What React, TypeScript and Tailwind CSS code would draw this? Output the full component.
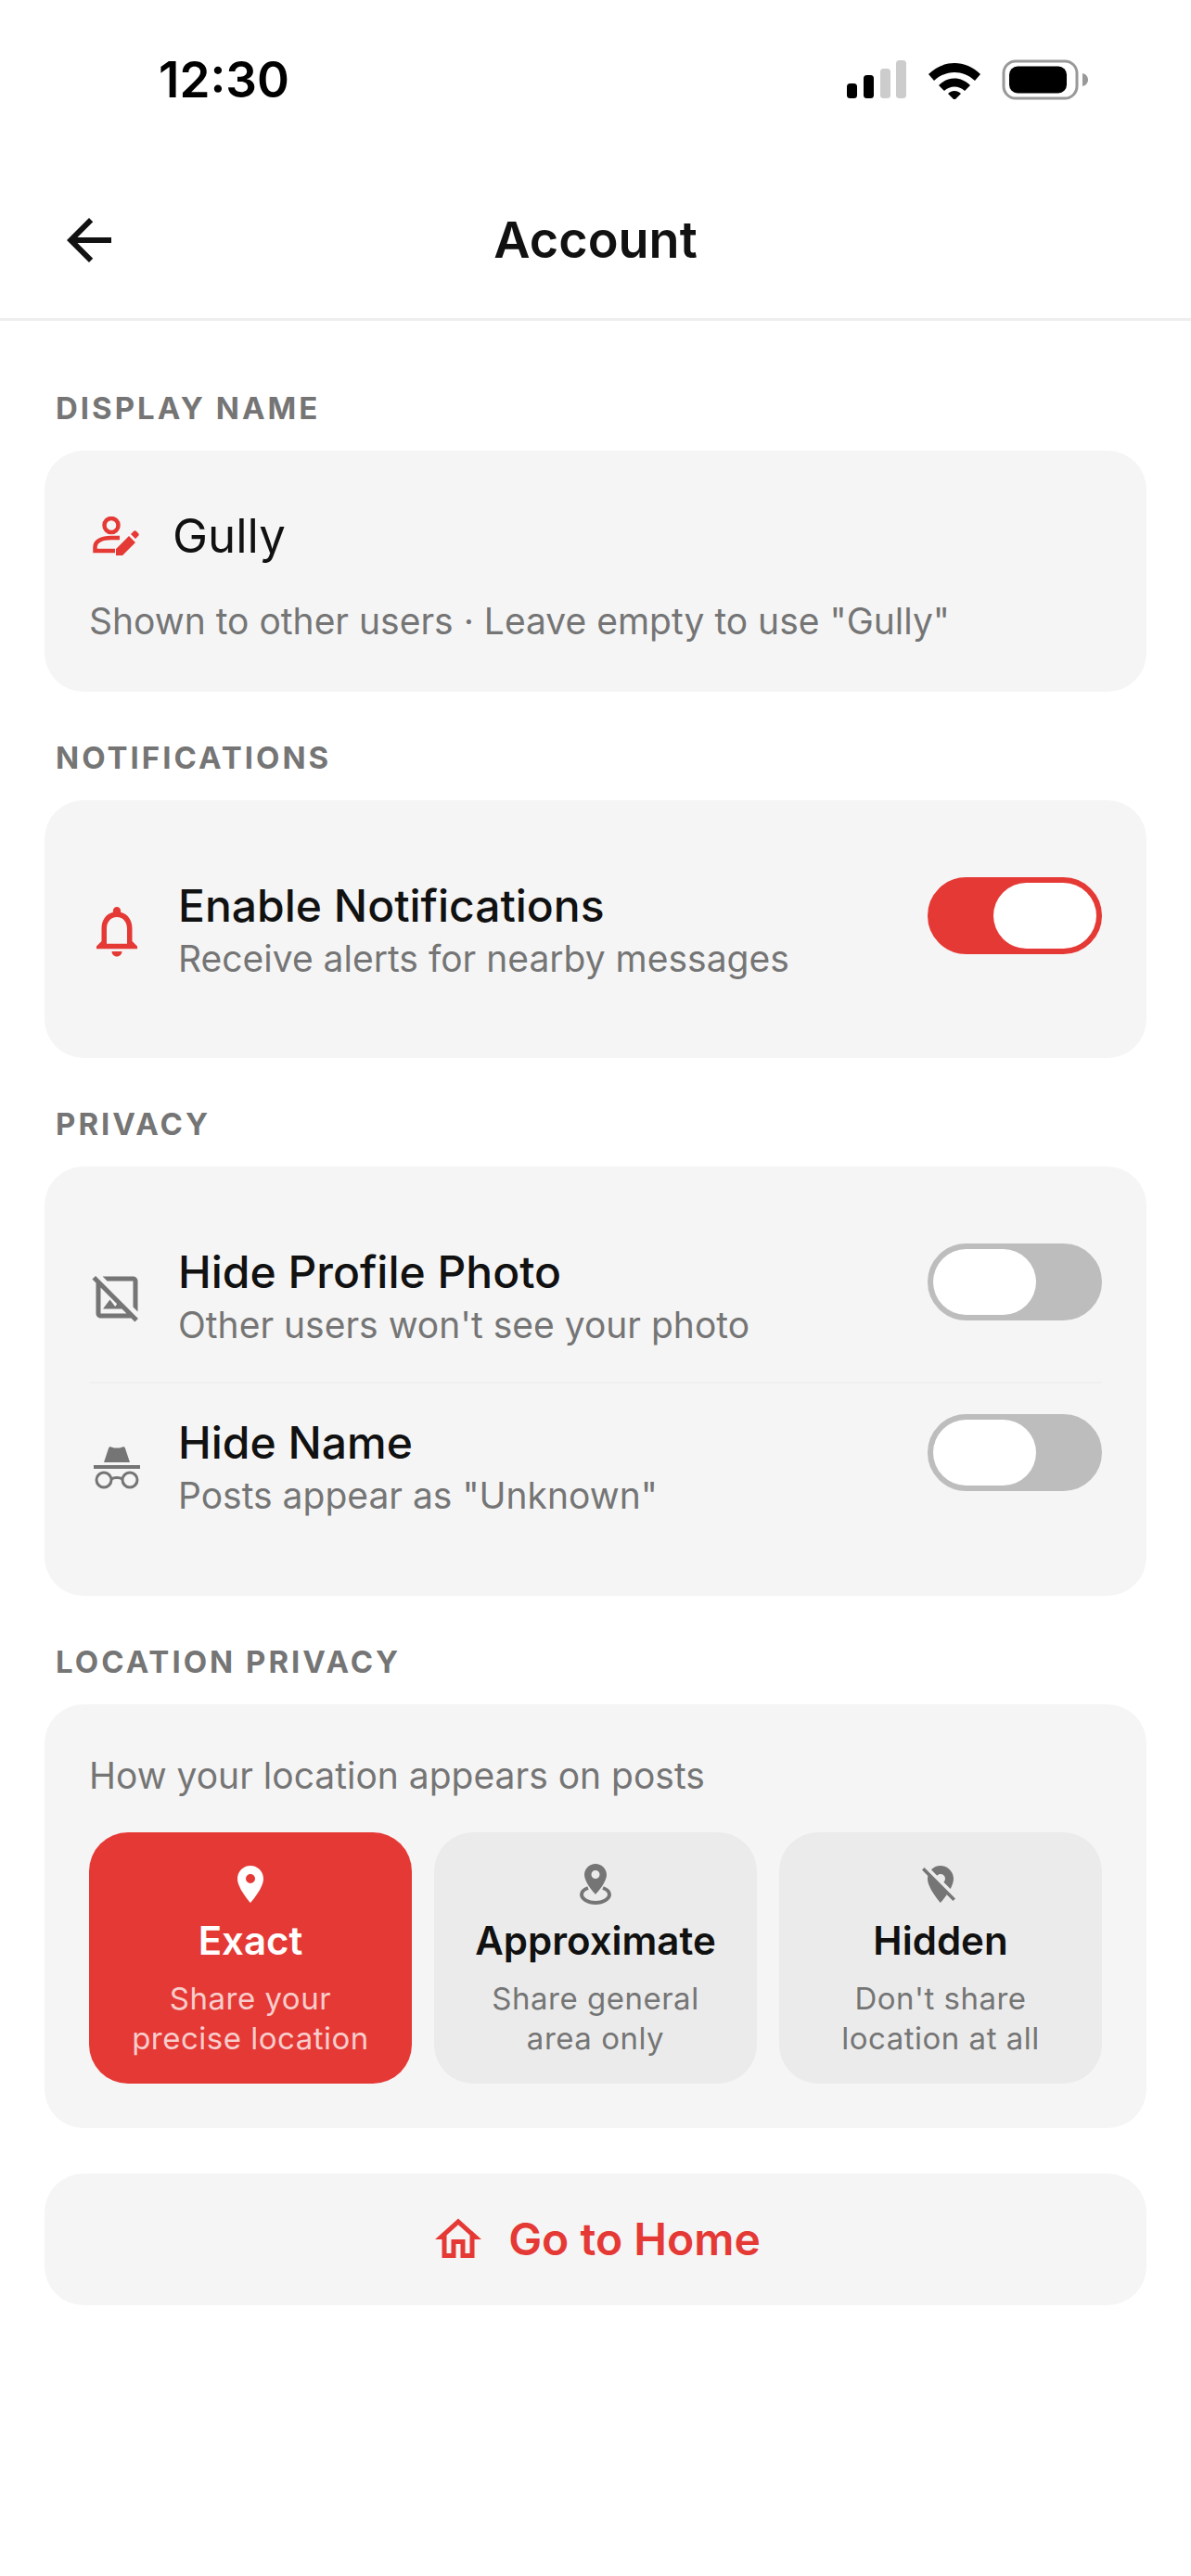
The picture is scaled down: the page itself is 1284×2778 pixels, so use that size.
import { MdArrowBack, MdLocationOff, MdLocationOn, MdOutlineHideImage, MdOutlineHome, MdOutlineNotifications } from "react-icons/md";

function StatusIcons() {
  return (
    <div className="flex items-center">
      <svg width="66" height="42" viewBox="0 0 66 42" className="ml-0">
        <rect x="1" y="25" width="11" height="16" rx="3.5" fill="#000" />
        <rect x="19" y="16" width="11" height="25" rx="3.5" fill="#000" />
        <rect x="37" y="9" width="11" height="32" rx="3.5" fill="#ccc" />
        <rect x="54" y="0" width="11" height="41" rx="3.5" fill="#ccc" />
      </svg>
      <svg width="58" height="42" viewBox="0 0 58 42" className="ml-[22px]">
        <path d="M1 15C17-1 41-1 57 15l-6 7C38 10 20 10 7 22z" fill="#000" />
        <path d="M12 27c10-10 24-10 34 0l-6 6c-6-6-16-6-22 0z" fill="#000" />
        <path d="M22 36c4-4 10-4 14 0l-7 7z" fill="#000" />
      </svg>
      <svg width="94" height="44" viewBox="0 0 94 44" className="ml-[22px]">
        <rect x="2" y="2" width="79" height="40" rx="13" fill="none" stroke="#999" strokeWidth="3" />
        <rect x="8" y="8" width="62" height="29" rx="9" fill="#000" transform="translate(0 -0.5)" />
        <path d="M87 15c4 1 6 4 6 7s-2 6-6 7z" fill="#999" />
      </svg>
    </div>
  );
}

function PersonEditIcon() {
  return (
    <svg width="50" height="42" viewBox="0 0 50 42" fill="none">
      <circle cx="20" cy="9.5" r="7.5" stroke="#E53935" strokeWidth="4.5" />
      <path d="M24 37H2.500v-4C2.500 27 9 23 20 23h9" stroke="#E53935" strokeWidth="4.5" />
      <path d="M25 42v-7L39 21l7 7-14 14zM41 19l3-3c1-1 2-1 3 0l2 2c1 1 1 2 0 3l-3 3z" fill="#E53935" />
    </svg>
  );
}

function IncognitoIcon() {
  return (
    <svg width="50" height="48" viewBox="0 0 50 48" fill="none">
      <path d="M11 18L16 3c.4-1.500 1.500-2 3-1.500l3 1h6l3-1c1.500-.5 2.600 0 3 1.500l5 15z" fill="#757575" />
      <rect x="0" y="21" width="50" height="4" fill="#757575" />
      <circle cx="11" cy="37" r="8" stroke="#757575" strokeWidth="3" />
      <circle cx="39" cy="37" r="8" stroke="#757575" strokeWidth="3" />
      <path d="M19 36c3-2 9-2 12 0" stroke="#757575" strokeWidth="3" />
    </svg>
  );
}

function ApproxPinIcon() {
  return (
    <svg width="34" height="44" viewBox="0 0 34 44" fill="none">
      <path fillRule="evenodd" clipRule="evenodd" d="M17 0c-6.600 0-12 5.200-12 11.800C5 20.500 17 33 17 33s12-12.500 12-21.200C29 5.200 23.600 0 17 0zm0 16a4.500 4.500 0 1 1 0-9 4.500 4.500 0 0 1 0 9z" fill="#757575" />
      <path d="M9 26c-4 1.500-7 3.500-7 7 0 5 7 9 15 9s15-4 15-9c0-3.500-3-5.500-7-7" stroke="#757575" strokeWidth="4" />
    </svg>
  );
}

function Toggle({ on }: { on: boolean }) {
  return (
    <div
      className={
        on
          ? "flex h-[83px] w-[188px] shrink-0 self-start justify-end rounded-full border-[6px] border-[#E53935] bg-[#E53935] -mt-px"
          : "flex h-[83px] w-[188px] shrink-0 self-start justify-start rounded-full border-[6px] border-[#BDBDBD] bg-[#BDBDBD] -mt-px"
      }
    >
      <div className="h-full w-[111px] rounded-full bg-white" />
    </div>
  );
}

function SectionLabel({ children }: { children: string }) {
  return <div className="mb-[26px] ml-[12px] h-[40px] text-[33px] font-bold leading-[40px] tracking-[3px] text-[#757575]">{children}</div>;
}

function ToggleRow({ icon, title, sub, on }: { icon: React.ReactNode; title: string; sub: string; on: boolean }) {
  return (
    <div className="flex items-center">
      <div className="flex w-[60px] shrink-0 justify-center">{icon}</div>
      <div className="ml-[36px] flex-1">
        <div className="h-[60px] text-[48px] font-medium leading-[60px] text-[#111111]">{title}</div>
        <div className="h-[54px] text-[39px] leading-[54px] text-[#757575]">{sub}</div>
      </div>
      <Toggle on={on} />
    </div>
  );
}

function LocationOption({ icon, title, lines, active }: { icon: React.ReactNode; title: string; lines: string[]; active?: boolean }) {
  return (
    <div className={active ? "flex h-[271px] flex-col items-center rounded-[42px] bg-[#E53935] pt-[32px]" : "flex h-[271px] flex-col items-center rounded-[42px] bg-[#EBEBEB] pt-[32px]"}>
      <div className="flex h-[48px] items-center justify-center">{icon}</div>
      <div className={active ? "mt-[10px] h-[54px] text-[42px] font-semibold leading-[54px] text-white" : "mt-[10px] h-[54px] text-[42px] font-semibold leading-[54px] text-[#111111]"}>{title}</div>
      <div className={active ? "mt-[14px] text-center text-[33px] leading-[43px] tracking-[0.5px] text-white/75" : "mt-[14px] text-center text-[33px] leading-[43px] tracking-[0.5px] text-[#757575]"}>
        {lines.map((l) => (
          <div key={l}>{l}</div>
        ))}
      </div>
    </div>
  );
}

export default function App() {
  return (
    <div className="min-h-[2778px] bg-white font-['Inter',sans-serif]">
      <div className="flex h-[172px] items-center justify-between pl-[171px] pr-[110px]">
        <div className="text-[53px] font-semibold leading-none text-black">12:30</div>
        <StatusIcons />
      </div>
      <div className="flex h-[174px] items-start border-b-[3px] border-[#EEEEEE] px-[60px] pt-[51px]">
        <MdArrowBack size={72} color="#111111" className="shrink-0" />
        <div className="flex-1 pr-[72px] text-center text-[54px] font-semibold leading-[72px] text-[#111111]">Account</div>
      </div>

      <div className="px-[48px] pt-[74px]">
        <SectionLabel>DISPLAY NAME</SectionLabel>
        <div className="h-[260px] rounded-[42px] bg-[#F5F5F5] px-[48px] pt-[62px]">
          <div className="flex h-[60px] items-center">
            <div className="ml-[4px]"><PersonEditIcon /></div>
            <div className="ml-[36px] text-[51px] leading-[60px] text-[#111111]">Gully</div>
          </div>
          <div className="mt-[35px] text-[39px] leading-[54px] text-[#757575]">Shown to other users · Leave empty to use "Gully"</div>
        </div>

        <div className="mt-[51px]">
          <SectionLabel>NOTIFICATIONS</SectionLabel>
          <div className="rounded-[42px] bg-[#F5F5F5] pb-[80px] pl-[48px] pr-[48px] pt-[84px]">
            <ToggleRow icon={<MdOutlineNotifications size={66} color="#E53935" className="shrink-0" />} title="Enable Notifications" sub="Receive alerts for nearby messages" on />
          </div>
        </div>

        <div className="mt-[51px]">
          <SectionLabel>PRIVACY</SectionLabel>
          <div className="rounded-[42px] bg-[#F5F5F5] pb-[81px] pl-[48px] pr-[48px] pt-[84px]">
            <ToggleRow icon={<MdOutlineHideImage size={60} color="#757575" className="shrink-0" />} title="Hide Profile Photo" sub="Other users won't see your photo" on={false} />
            <div className="my-[34px] h-[2px] bg-[#F0F0F0]" />
            <ToggleRow icon={<IncognitoIcon />} title="Hide Name" sub={'Posts appear as "Unknown"'} on={false} />
          </div>
        </div>

        <div className="mt-[51px]">
          <SectionLabel>LOCATION PRIVACY</SectionLabel>
          <div className="rounded-[42px] bg-[#F5F5F5] px-[48px] pb-[48px] pt-[48px]">
            <div className="mb-[32px] h-[58px] text-[39px] leading-[58px] text-[#757575]">How your location appears on posts</div>
            <div className="grid grid-cols-3 gap-[24px]">
              <LocationOption active icon={<MdLocationOn size={48} color="#fff" />} title="Exact" lines={["Share your", "precise location"]} />
              <LocationOption icon={<ApproxPinIcon />} title="Approximate" lines={["Share general", "area only"]} />
              <LocationOption icon={<MdLocationOff size={48} color="#757575" />} title="Hidden" lines={["Don't share", "location at all"]} />
            </div>
          </div>
        </div>

        <div className="mt-[49px] flex h-[142px] items-center justify-center gap-[24px] rounded-[42px] bg-[#F5F5F5]">
          <MdOutlineHome size={60} color="#E53935" />
          <div className="text-[48px] font-semibold leading-none text-[#E53935]">Go to Home</div>
        </div>
      </div>
    </div>
  );
}
